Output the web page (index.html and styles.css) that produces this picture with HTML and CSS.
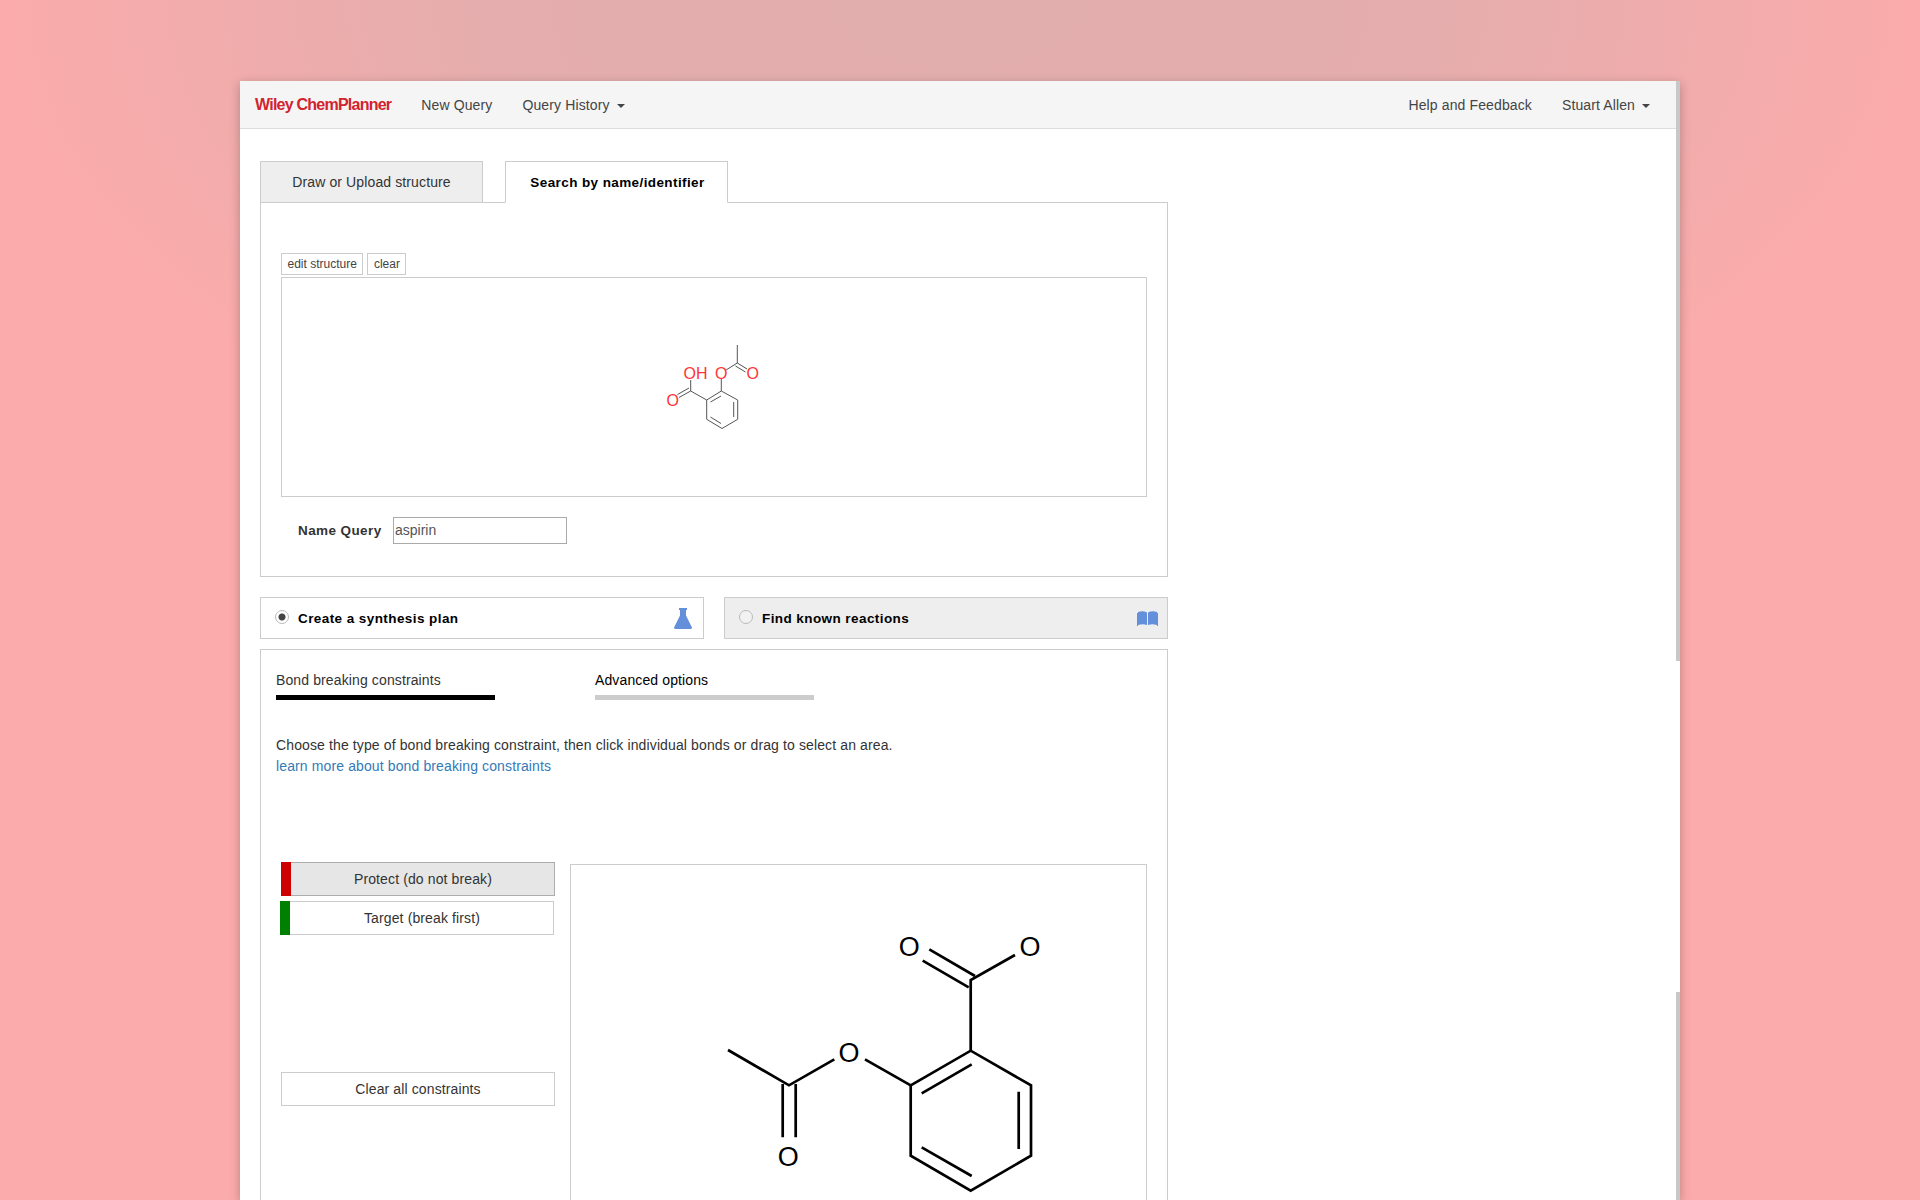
FILE: index.html
```html
<!DOCTYPE html>
<html lang="en">
  <head>
    <meta charset="UTF-8" />
    <meta name="viewport" content="width=device-width, initial-scale=1.0" />
    <title>Wiley ChemPlanner</title>
    <link rel="stylesheet" href="styles.css">
  </head>
  <body>
    <div class="win">
      <div class="nav">
        <span class="logo">Wiley ChemPlanner</span>
        <a class="navLink">New Query</a>
        <a class="navLink">Query History <i class="caret"></i></a>
        <a class="navLink navRight">Help and Feedback</a>
        <a class="navLink">Stuart Allen <i class="caret"></i></a>
      </div>
      <div class="scrollTop"></div>
      <div class="scrollBottom"></div>

      <div class="content">
        <div class="tabs">
          <div class="tab">Draw or Upload structure</div>
          <div class="tab active">Search by name/identifier</div>
        </div>

        <div class="panel">
          <div class="miniBtns">
            <button class="mini">edit structure</button>
            <button class="mini">clear</button>
          </div>
          <div class="structBox">
            <svg class="smallMol" width="140" height="110" viewBox="0 0 140 110">
              <g stroke="#555" stroke-width="1" fill="none">
                <path d="M97.300 15V33L86 40" />
                <path d="M97.300 33L107 39M95.500 36L105.500 42" />
                <path d="M81.300 49V61L97.700 70V89.300L82 98.500L66.700 89.300V70L81.300 61" />
                <path d="M66.700 70L50.700 61V50" />
                <path d="M50.700 61L39 67.500M49 58L37.500 64.500" />
                <path d="M93.700 72V87M81 93.500L70.500 87M70.500 72L81 66" />
              </g>
              <g class="smallAtom">
                <text x="32.700" y="76">O</text>
                <text x="55.500" y="49">OH</text>
                <text x="81.300" y="49">O</text>
                <text x="112.700" y="49">O</text>
              </g>
            </svg>
          </div>
          <div class="nameRow">
            <label class="nameLabel">Name Query</label>
            <input class="nameInput" type="text" value="aspirin" />
          </div>
        </div>

        <div class="modes">
          <div class="mode">
            <span class="radio on"></span>
            <b class="modeText">Create a synthesis plan</b>
            <svg class="modeIcon flask" width="18" height="21" viewBox="0 0 18 21">
              <path fill="#6490db" d="M5 0H13V2H12V7.500L18 19.500Q18 21 16.500 21H1.500Q0 21 0 19.500L6 7.500V2H5Z" />
            </svg>
          </div>
          <div class="mode off">
            <span class="radio"></span>
            <b class="modeText">Find known reactions</b>
            <svg class="modeIcon" width="21" height="15" viewBox="0 0 21 15">
              <path fill="#6490db" d="M1 1Q6 -0.500 10 1.500V14Q6 12.500 1 14V15H0V2H1ZM11 1.500Q15 -0.500 20 1V14Q15 12.500 11 14ZM20 2H21V15H20Z" />
            </svg>
          </div>
        </div>

        <div class="panel lower">
          <div class="subTabs">
            <div class="subTab current">Bond breaking constraints</div>
            <div class="subTab">Advanced options</div>
          </div>
          <p class="intro">Choose the type of bond breaking constraint, then click individual bonds or drag to select an area.</p>
          <a class="learn">learn more about bond breaking constraints</a>

          <div class="work">
            <div class="side">
              <button class="cons protect"><span class="swatch red"></span>Protect (do not break)</button>
              <button class="cons target"><span class="swatch green"></span>Target (break first)</button>
              <button class="cons clearAll">Clear all constraints</button>
            </div>
            <div class="canvas">
              <svg class="bigMol" width="400" height="300" viewBox="0 0 400 300">
                <g stroke="#000" stroke-width="2.700" fill="none">
                  <path d="M28 150L89 185.300L134.300 159.300" />
                  <path d="M165 159.300L210.700 185.300" />
                  <path d="M210.700 185.300L270.700 150.700L331 185.300V255.700L270.700 290.700L210.700 255.700Z" />
                  <path d="M221.700 193.300L271.700 164.300M318.700 191.700V249M221.700 247.300L271.700 276" />
                  <path d="M270.700 150.700V80L315 55" />
                  <path d="M268.700 87.300L222.700 60.700M275 76L229.300 49.300" />
                  <path d="M82.700 237.300V184M95.700 237.300V184" />
                </g>
                <g class="bigAtom">
                  <text x="149" y="161.500">O</text>
                  <text x="209.300" y="56">O</text>
                  <text x="330" y="56">O</text>
                  <text x="88.300" y="266">O</text>
                </g>
              </svg>
            </div>
          </div>
        </div>
      </div>
    </div>
  </body>
</html>
```

FILE: styles.css
```css
html,
body {
  margin: 0;
  height: 100%;
  overflow: hidden;
}

body {
  background: radial-gradient(ellipse 960px 520px at 50% 0, #e2adad 0%, #e5adad 50%, #fbabab 100%) no-repeat, #fbabab;
  font-family: "Liberation Sans", Arial, sans-serif;
  font-size: 14px;
  letter-spacing: 0.12px;
  color: #333;
  box-sizing: border-box;
  padding: 81px 240px 0;
}

.win {
  position: relative;
  background: #fff;
  height: 1119px;
  box-shadow: 0 3px 10px rgba(0, 0, 0, 0.25);
}

.nav {
  display: flex;
  align-items: center;
  height: 47px;
  background: #f5f5f5;
  border-bottom: 1px solid #ddd;
  padding: 0 30px 0 15px;
}

.logo {
  color: #d2232f;
  font-weight: bold;
  font-size: 16px;
  letter-spacing: -0.76px;
  margin-right: 30px;
}

.navLink {
  color: #444;
  margin-right: 30px;
}

.navLink:last-child {
  margin-right: 0;
}

.navRight {
  margin-left: auto;
}

.caret {
  display: inline-block;
  width: 0;
  height: 0;
  margin-left: 3px;
  vertical-align: middle;
  border-top: 4px solid #444;
  border-left: 4px solid transparent;
  border-right: 4px solid transparent;
}

.scrollTop,
.scrollBottom {
  position: absolute;
  right: 0;
  width: 4px;
  background: #c8c8c8;
}

.scrollTop {
  top: 0;
  height: 580px;
}

.scrollBottom {
  top: 911px;
  bottom: 0;
}

.content {
  padding: 32px 0 0 20px;
  width: 908px;
}

.tabs {
  display: flex;
  gap: 22px;
  margin-bottom: -1px;
  position: relative;
}

.tab {
  width: 223px;
  height: 42px;
  line-height: 41px;
  text-align: center;
  box-sizing: border-box;
  background: #eee;
  border: 1px solid #ccc;
  color: #333;
}

.tab.active {
  background: #fff;
  border-bottom-color: #fff;
  color: #000;
  font-weight: bold;
  font-size: 13.500px;
  letter-spacing: 0.4px;
  padding-left: 2px;
}

.panel {
  border: 1px solid #ccc;
  padding: 50px 20px 0;
  height: 375px;
  box-sizing: border-box;
}

.miniBtns {
  display: flex;
  gap: 4px;
  margin-bottom: 2px;
}

.mini {
  height: 22px;
  padding: 0 5.500px;
  border: 1px solid #ccc;
  background: #fff;
  color: #444;
  font: 12px "Liberation Sans", Arial, sans-serif;
}

.structBox {
  height: 220px;
  box-sizing: border-box;
  border: 1px solid #ccc;
  display: flex;
  justify-content: center;
  padding-top: 52px;
  padding-right: 8px;
}

.smallAtom text {
  fill: #f33;
  font-size: 16px;
  text-anchor: middle;
}

.nameRow {
  display: flex;
  align-items: center;
  margin-top: 20px;
  padding-left: 17px;
}

.nameLabel {
  font-weight: bold;
  font-size: 13.500px;
  letter-spacing: 0.4px;
  width: 95px;
}

.nameInput {
  width: 174px;
  height: 27px;
  box-sizing: border-box;
  border: 1px solid #aaa;
  padding: 0 1px 1px;
  color: #555;
  font: 14px "Liberation Sans", Arial, sans-serif;
}

.modes {
  display: flex;
  justify-content: space-between;
  margin: 20px 0 10px;
}

.mode {
  display: flex;
  align-items: center;
  width: 444px;
  height: 42px;
  box-sizing: border-box;
  border: 1px solid #ccc;
  padding: 0 9px 0 14px;
}

.mode.off {
  background: #eee;
}

.radio {
  width: 14px;
  height: 14px;
  border-radius: 50%;
  border: 1px solid #bbb;
  background: #fff;
  box-sizing: border-box;
  margin-right: 9px;
  position: relative;
  top: -1px;
}

.mode.off .radio {
  background: #f2f2f2;
}

.radio.on {
  background: radial-gradient(circle, #444 0, #444 3px, #fff 4px);
}

.modeText {
  font-size: 13.500px;
  letter-spacing: 0.42px;
  color: #000;
}

.modeIcon {
  margin-left: auto;
}

.flask {
  margin-right: 2px;
}

.panel.lower {
  height: 551px;
  border-bottom: 0;
  padding: 20px 15px 0;
}

.subTabs {
  display: flex;
  gap: 100px;
}

.subTab {
  width: 219px;
  padding-bottom: 5px;
  border-bottom: 5px solid #ccc;
  color: #000;
  line-height: 20px;
}

.subTab.current {
  border-bottom-color: #000;
  color: #333;
}

.intro {
  margin: 35px 0 0;
  line-height: 21px;
}

.learn {
  display: block;
  color: #337ab7;
  line-height: 21px;
}

.work {
  display: flex;
  margin-top: 85px;
  padding-left: 5px;
}

.side {
  width: 289px;
  flex: none;
}

.cons {
  display: block;
  position: relative;
  width: 274px;
  height: 34px;
  padding: 0;
  box-sizing: border-box;
  border: 1px solid #ccc;
  background: #fff;
  color: #333;
  font: 14px "Liberation Sans", Arial, sans-serif;
  letter-spacing: 0.12px;
}

.protect {
  background: #e6e6e6;
  border-color: #adadad;
  padding-left: 10px;
}

.target {
  margin: 5px 0 0 -1px;
  padding-left: 10px;
}

.clearAll {
  margin-top: 137px;
}

.swatch {
  position: absolute;
  left: -1px;
  top: -1px;
  bottom: -1px;
  width: 10px;
}

.red {
  background: #c00;
}

.green {
  background: #008000;
}

.canvas {
  margin-top: 2px;
  width: 577px;
  height: 336px;
  box-sizing: border-box;
  border: 1px solid #ccc;
  border-bottom: 0;
  padding: 35px 0 0 129px;
}

.bigMol {
  display: block;
}

.bigAtom text {
  fill: #000;
  font-size: 27px;
  text-anchor: middle;
}
```
